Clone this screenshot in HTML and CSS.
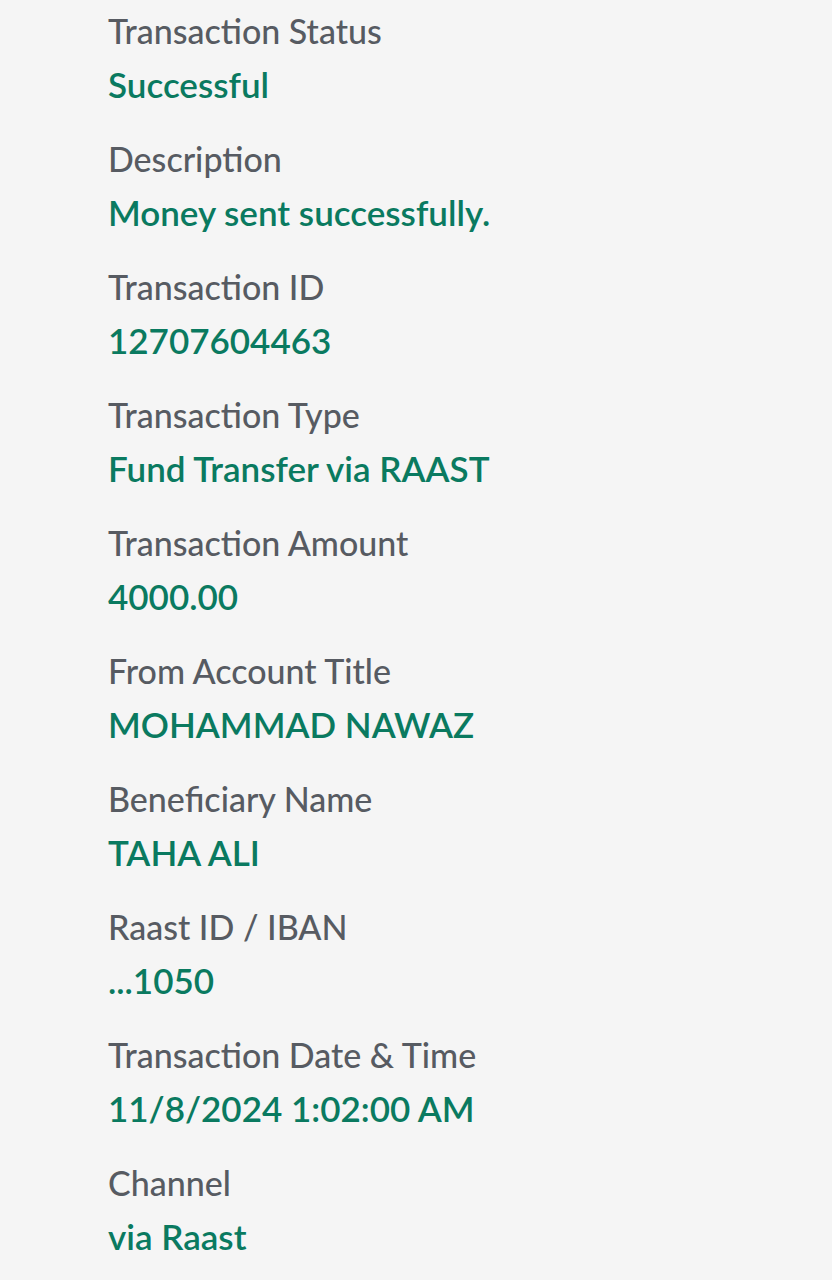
FILE: index.html
```html
<!DOCTYPE html>
<html>
<head>
<meta charset="utf-8">
<link rel="stylesheet" href="styles.css">
</head>
<body>
<div class="list">
  <div class="item"><div class="label">Transaction Status</div><div class="value">Successful</div></div>
  <div class="item"><div class="label">Description</div><div class="value">Money sent successfully.</div></div>
  <div class="item"><div class="label">Transaction ID</div><div class="value">12707604463</div></div>
  <div class="item"><div class="label">Transaction Type</div><div class="value">Fund Transfer via RAAST</div></div>
  <div class="item"><div class="label">Transaction Amount</div><div class="value">4000.00</div></div>
  <div class="item"><div class="label">From Account Title</div><div class="value">MOHAMMAD NAWAZ</div></div>
  <div class="item"><div class="label">Beneficiary Name</div><div class="value">TAHA ALI</div></div>
  <div class="item"><div class="label">Raast ID / IBAN</div><div class="value">...1050</div></div>
  <div class="item"><div class="label">Transaction Date &amp; Time</div><div class="value">11/8/2024 1:02:00 AM</div></div>
  <div class="item"><div class="label">Channel</div><div class="value">via Raast</div></div>
</div>
</body>
</html>
```
FILE: styles.css
```css
html, body {
  margin: 0;
  padding: 0;
  background: #f5f5f5;
}
body {
  font-family: Lato, "Liberation Sans", sans-serif;
  height: 1280px;
  overflow: hidden;
}
.list {
  display: flex;
  flex-direction: column;
  padding: 6px 0 0 108px;
}
.item {
  display: flex;
  flex-direction: column;
  height: 128px;
}
.label {
  font-size: 34px;
  font-weight: 500;
  line-height: 50px;
  color: #575b62;
}
.value {
  font-size: 35px;
  font-weight: 600;
  line-height: 56px;
  color: #0a7a60;
}
```
